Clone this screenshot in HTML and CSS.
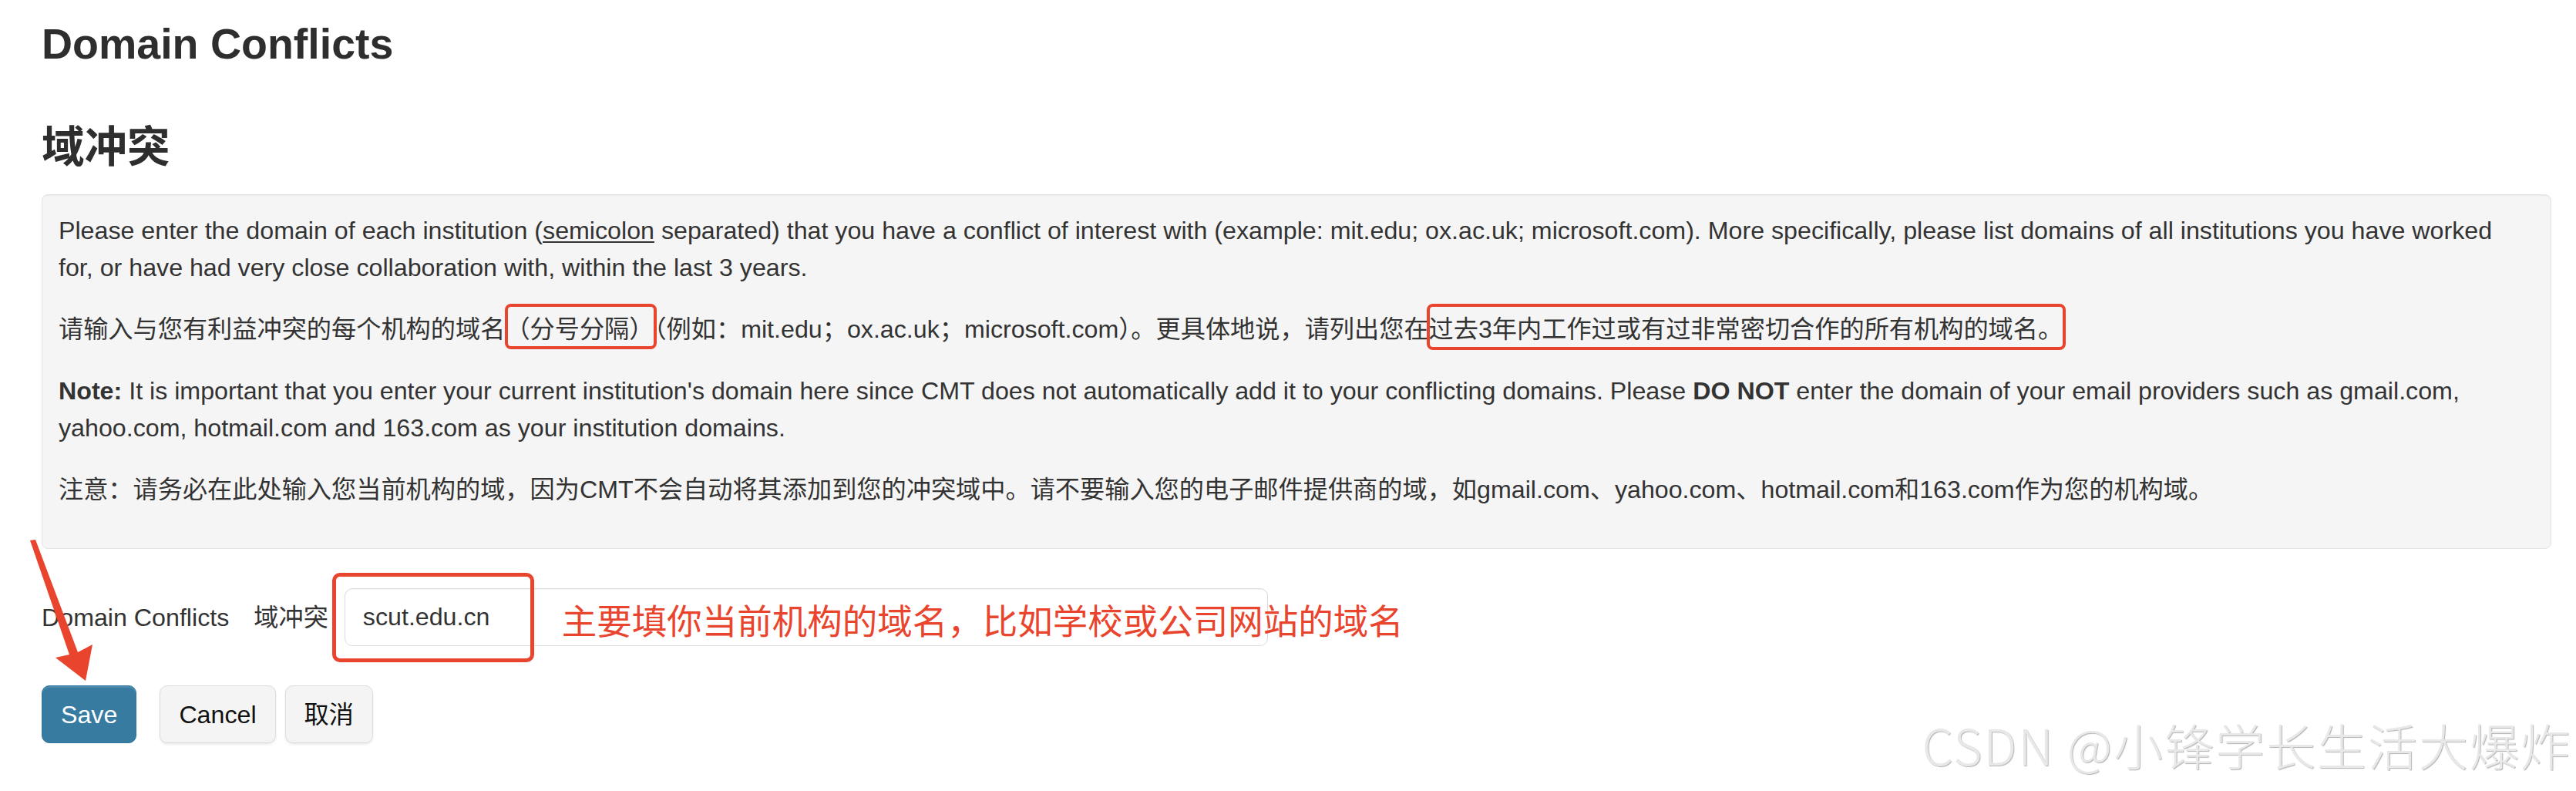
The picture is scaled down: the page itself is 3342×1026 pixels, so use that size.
FILE: index.html
```html
<!DOCTYPE html>
<html lang="zh-CN">
<head>
    <meta charset="UTF-8">
    <meta name="viewport" content="width=device-width, initial-scale=1.0">
    <title>Domain Conflicts</title>
    <link rel="stylesheet" href="styles.css">
</head>
<body>
    <div class="page">
        <h1 class="title">Domain Conflicts</h1>
        <h2 class="title title-zh">域冲突</h2>

        <div class="well">
            <p>Please enter the domain of each institution (<u>semicolon</u> separated) that you have a conflict of interest with (example: mit.edu; ox.ac.uk; microsoft.com). More specifically, please list domains of all institutions you have worked for, or have had very close collaboration with, within the last 3 years.</p>
            <p>请输入与您有利益冲突的每个机构的域名<span class="mark">（分号分隔）</span>（例如：mit.edu；ox.ac.uk；microsoft.com）。更具体地说，请列出您在<span class="mark mark-wide">过去3年内工作过或有过非常密切合作的所有机构的域名。</span></p>
            <p><strong>Note:</strong> It is important that you enter your current institution's domain here since CMT does not automatically add it to your conflicting domains. Please <strong>DO NOT</strong> enter the domain of your email providers such as gmail.com, yahoo.com, hotmail.com and 163.com as your institution domains.</p>
            <p>注意：请务必在此处输入您当前机构的域，因为CMT不会自动将其添加到您的冲突域中。请不要输入您的电子邮件提供商的域，如gmail.com、yahoo.com、hotmail.com和163.com作为您的机构域。</p>
        </div>

        <form class="form-row" onsubmit="return false;">
            <label class="label" for="domains">Domain Conflicts</label>
            <label class="label label-zh" for="domains">域冲突</label>
            <div class="field">
                <input id="domains" class="input" type="text" value="scut.edu.cn">
                <span class="note">主要填你当前机构的域名，比如学校或公司网站的域名</span>
            </div>
        </form>

        <div class="actions">
            <button class="btn btn-primary" type="button">Save</button>
            <button class="btn btn-cancel" type="button">Cancel</button>
            <button class="btn" type="button">取消</button>
        </div>
    </div>

    <!-- red arrow pointing at the Save button -->
    <svg class="arrow" width="130" height="890" viewBox="0 0 130 890">
        <polygon points="39,701 46,700 101,846 120,836 111,883 72,853 90,849" fill="#e9442d"/>
    </svg>

    <div class="watermark">CSDN @小锋学长生活大爆炸</div>
</body>
</html>
```

FILE: styles.css
```css
body {
    margin: 0;
    font-family: "Liberation Sans", "Noto Sans CJK SC", sans-serif;
    font-size: 32.2px;
    line-height: 48px;
    color: #333;
    background-color: #fff;
    position: relative;
    min-height: 1026px;
    overflow: hidden;
}
.page {
    padding: 26px 32px 0 54px;
}
.title {
    font-size: 55.5px;
    line-height: 62px;
    font-weight: bold;
    color: #2e2e2e;
    margin: 0;
}
.title-zh {
    margin-top: 72px;
}
.well {
    margin-top: 30px;
    background-color: #f5f5f5;
    border: 1px solid #e3e3e3;
    border-radius: 8px;
    box-shadow: inset 0 1px 1px rgba(0, 0, 0, 0.05);
    padding: 22px 42px 20px 21px;
}
.well p {
    margin: 0 0 32px;
}
.well u {
    text-decoration-thickness: 2px;
    text-underline-offset: 3px;
}
.mark {
    position: relative;
}
.mark::after {
    content: "";
    position: absolute;
    left: 0;
    right: -3px;
    top: -15px;
    bottom: -8px;
    border: 4px solid #e9442d;
    border-radius: 8px;
}
.mark-wide::after {
    left: -3px;
    right: -4px;
    bottom: -9px;
}
.form-row {
    display: flex;
    align-items: center;
    height: 75px;
    margin: 51px 0 0;
}
.label {
    margin-right: 32px;
}
.label-zh {
    margin-right: 21px;
}
.field {
    position: relative;
    width: 1198px;
    height: 75px;
}
.input {
    box-sizing: border-box;
    width: 100%;
    height: 75px;
    padding: 0 23px;
    border: 1px solid #d8dce2;
    border-radius: 10px;
    background-color: #fff;
    font: inherit;
    color: #333;
    box-shadow: inset 0 1px 1px rgba(0, 0, 0, 0.04);
}
.field::before {
    content: "";
    position: absolute;
    left: -16px;
    top: -20px;
    width: 262px;
    height: 116px;
    box-sizing: border-box;
    border: 5px solid #e9442d;
    border-radius: 10px;
    z-index: 1;
}
.note {
    position: absolute;
    left: 282px;
    top: 18px;
    font-family: "Noto Sans CJK SC", sans-serif;
    font-size: 45.5px;
    line-height: 45px;
    color: #e9442d;
    white-space: nowrap;
}
.actions {
    display: flex;
    margin-top: 51px;
}
.btn {
    height: 75px;
    padding: 0 24px;
    font: inherit;
    color: #111;
    background-color: #f4f4f4;
    border: 1px solid #dcdcdc;
    border-radius: 10px;
    box-shadow: 0 2px 3px rgba(0, 0, 0, 0.08);
    cursor: pointer;
}
.btn-primary {
    color: #fff;
    background-color: #377ba1;
    border-color: #3176a0;
    box-shadow: inset 0 2px 0 rgba(255, 255, 255, 0.12);
    margin-right: 30px;
}
.btn-cancel {
    margin-right: 12px;
}
.arrow {
    position: absolute;
    left: 0;
    top: 0;
}
.watermark {
    position: absolute;
    right: 6px;
    bottom: 29px;
    font-family: "Noto Sans CJK SC", sans-serif;
    font-weight: 300;
    font-size: 64px;
    line-height: 64px;
    letter-spacing: 2px;
    color: #e8e8e8;
    text-shadow: 1px 1px 1px rgba(0, 0, 0, 0.3);
    white-space: nowrap;
}
```
